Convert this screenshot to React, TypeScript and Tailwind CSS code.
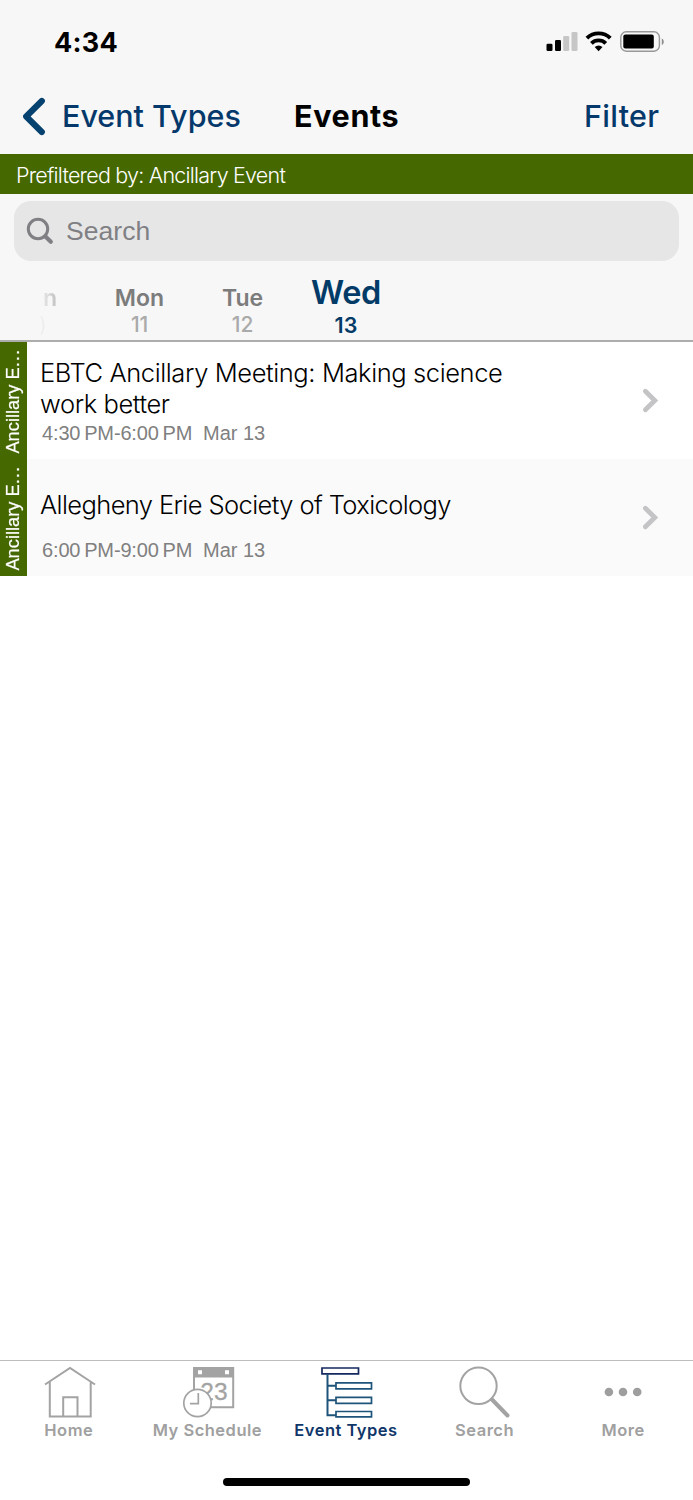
import React from "react";

const sans = "font-['Inter','Liberation_Sans',sans-serif]";
const arial = "font-['Liberation_Sans',Arial,sans-serif]";

function StatusIcons() {
  return (
    <svg width="120" height="24" viewBox="545 30 120 24" className="block">
      <rect x="546.5" y="43.7" width="6" height="7.3" rx="1.3" fill="#000" />
      <rect x="555" y="40" width="6" height="11" rx="1.3" fill="#000" />
      <rect x="563.2" y="36" width="6" height="15" rx="1.3" fill="#c6c6c6" />
      <rect x="571.5" y="32" width="6" height="19" rx="1.3" fill="#c6c6c6" />
      <g fill="none" stroke="#000" strokeWidth="3.9">
        <path d="M586.9 38.1a16.8 16.8 0 0 1 23.4 0" />
        <path d="M591.4 43.3a10.4 10.4 0 0 1 14.4 0" />
      </g>
      <path d="M594.7 47.1a5.6 5.6 0 0 1 7.8 0L598.6 51.3z" fill="#000" />
      <rect x="620.8" y="31.8" width="38.6" height="19.4" rx="5.4" fill="none" stroke="#989898" strokeWidth="1.4" />
      <rect x="623.3" y="34.5" width="30.5" height="14" rx="2" fill="#000" />
      <path d="M661.8 38.4c2.6 1.2 2.6 5.4 0 6.6z" fill="#8c8c8c" />
    </svg>
  );
}

function Day({ name, date, width }: { name: string; date: string; width: string }) {
  return (
    <div className={`${width} flex shrink-0 flex-col items-center pt-[18px]`}>
      <span className="text-[23px] leading-[27px] font-semibold text-[#7c7c7c]">{name}</span>
      <span className="text-[21px] leading-[26px] font-medium tracking-[-0.200px] text-[#aaaaaa]">{date}</span>
    </div>
  );
}

function EventRow({ title, hours, date, row, titleBox }: { title: React.ReactNode; hours: string; date: string; row: string; titleBox: string }) {
  return (
    <div className={`flex h-[117px] ${row}`}>
      <div className="flex w-[27px] flex-col items-start justify-end bg-[#466800] pb-[5px]">
        <span className={`${arial} -ml-px rotate-180 text-[18.300px] leading-[27px] whitespace-nowrap text-white [-webkit-text-stroke:0.200px_white] [writing-mode:vertical-rl]`}>
          Ancillary E<span className="tracking-[1px]">...</span>
        </span>
      </div>
      <div className="w-[596px] pl-[13px]">
        <div className={`${titleBox} text-[25.500px] leading-[31px] font-light whitespace-nowrap text-black`}>{title}</div>
        <div className={`${arial} flex pl-[2px] text-[20px] leading-[24px] whitespace-pre text-[#808080]`}>
          <span className="w-[161px] tracking-[-0.150px]">{hours}</span>
          <span>{date}</span>
        </div>
      </div>
      <svg width="20" height="117" viewBox="0 0 20 117" className="ml-[17px]" fill="none" stroke="#c4c4c6" strokeWidth="4.800" strokeLinecap="round" strokeLinejoin="miter">
        <path d="M5.400 49.200l9.400 9.300-9.400 9.300" />
      </svg>
    </div>
  );
}

function HomeIcon() {
  return (
    <svg width="54" height="54" viewBox="0 0 54 54" fill="none" stroke="#a3a3a3" strokeWidth="2">
      <path d="M2 19.500L27 3l25 16.500M6.800 16.500V51.500H47.700V16.500" />
      <path d="M20.200 51V32.300H34.500V51" />
    </svg>
  );
}

function ScheduleIcon() {
  return (
    <svg width="54" height="54" viewBox="0 0 54 54">
      <path d="M12 3H51.200V42.200H12z" fill="#fff" stroke="#a3a3a3" strokeWidth="2" />
      <path d="M11 2h41v10.500H11z" fill="#a3a3a3" />
      <path d="M16 5.200h4v4h-4zM43 5.200h4v4h-4z" fill="#fff" />
      <text x="18.300" y="34.500" fontSize="24.500" fill="#a3a3a3" stroke="#a3a3a3" strokeWidth="0.300" fontFamily="Liberation Sans, sans-serif">23</text>
      <circle cx="15.500" cy="38" r="13.700" fill="#fff" stroke="#a3a3a3" strokeWidth="1.700" />
      <path d="M16.300 28v10.600H8" fill="none" stroke="#a3a3a3" strokeWidth="1.700" />
    </svg>
  );
}

function TypesIcon() {
  return (
    <svg width="54" height="54" viewBox="0 0 54 54" fill="none" stroke="#1e5479" strokeWidth="1.700">
      <path d="M2 3H38.500V8.800H2z" stroke="#15285f" />
      <path d="M7.500 9V50.200H16M7.500 20.700H16M7.500 35.300H16" strokeWidth="2" />
      <path d="M16 17.800H51.500V23.800H16zM16 32.300H51.500V38.300H16zM16 46.500H51.500V51.800H16z" />
    </svg>
  );
}

function SearchTabIcon() {
  return (
    <svg width="54" height="54" viewBox="0 0 54 54" fill="none" stroke="#a3a3a3">
      <circle cx="20.500" cy="20.800" r="18.200" strokeWidth="2" />
      <path d="M34 34.500L49.500 50.500" strokeWidth="4" strokeLinecap="round" />
    </svg>
  );
}

function MoreIcon() {
  return (
    <svg width="54" height="54" viewBox="0 0 54 54" fill="#9e9e9e">
      <circle cx="11.900" cy="27" r="4.300" />
      <circle cx="26" cy="27" r="4.300" />
      <circle cx="40.200" cy="27" r="4.300" />
    </svg>
  );
}

function Tab({ icon, label, color = "text-[#a0a0a0]", inset = "pl-[1px]" }: { icon: React.ReactNode; label: string; color?: string; inset?: string }) {
  return (
    <div className={`flex flex-1 flex-col items-center pt-[4px] ${color}`}>
      <div className={inset}>{icon}</div>
      <span className="-ml-px text-[16.500px] leading-[22px] font-semibold tracking-[0.500px] whitespace-nowrap">{label}</span>
    </div>
  );
}

export default function App() {
  return (
    <div className={`${sans} flex h-[1500px] w-[693px] flex-col overflow-hidden bg-white`}>
      <header className="h-[154px] bg-[#f7f7f7]">
        <div className="flex h-[84px] items-center justify-between pr-[28px] pl-[54px]">
          <span className="pt-px text-[27px] leading-[32px] font-bold tracking-[0.250px]">4:34</span>
          <StatusIcons />
        </div>
        <div className="flex h-[64px] items-center">
          <svg width="26" height="40" viewBox="0 0 26 40" className="ml-[22px]" fill="none" stroke="#06426f" strokeWidth="6.200" strokeLinecap="round" strokeLinejoin="round">
            <path d="M19.800 5L4.200 20.500L19.800 36" />
          </svg>
          <span className="ml-[14px] w-[232px] text-[30.500px] leading-[38px] font-medium text-[#06396b]">Event Types</span>
          <span className="w-[290px] text-[30.500px] leading-[38px] font-bold tracking-[0.650px]">Events</span>
          <span className="text-[30.500px] leading-[38px] font-medium tracking-[0.300px] text-[#06396b]">Filter</span>
        </div>
      </header>

      <div className="flex h-[40px] items-center bg-[#466800] pt-[2px] pl-[16px] text-[21.500px] leading-[26px] font-light tracking-[-0.780px] text-white">
        Prefiltered by: Ancillary Event
      </div>

      <div className="h-[73px] bg-[#f7f7f7] px-[14px] pt-[7px]">
        <div className="flex h-[60px] items-center rounded-[17px] bg-[#e6e6e7] pl-[12px]">
          <svg width="30" height="30" viewBox="0 0 30 30" fill="none" stroke="#808084">
            <circle cx="12" cy="13" r="9.700" strokeWidth="3" />
            <path d="M19.200 20.200L24.800 25.800" strokeWidth="4.200" strokeLinecap="round" />
          </svg>
          <span className={`${arial} ml-[10px] text-[26.500px] leading-[32px] tracking-[0.050px] text-[#808084]`}>Search</span>
        </div>
      </div>

      <div className="flex h-[75px] shrink-0 border-b-2 border-[#adadad] bg-[#f7f7f7]">
        <div className="flex w-[88px] flex-col pt-[18px] pl-[38px] [mask-image:linear-gradient(to_right,transparent_38px,black_80px)]">
          <span className="pl-[5px] text-[23px] leading-[27px] font-semibold text-[#7c7c7c]">n</span>
          <span className="pl-px text-[21px] leading-[26px] text-[#aaaaaa]">)</span>
        </div>
        <Day name="Mon" date="11" width="w-[103px]" />
        <Day name="Tue" date="12" width="w-[103px]" />
        <div className="flex w-[104px] flex-col items-center pt-[6px] text-[#033b68]">
          <span className="text-[32.500px] leading-[40px] font-semibold tracking-[-0.350px]">Wed</span>
          <span className="text-[21.500px] leading-[24px] font-semibold">13</span>
        </div>
      </div>

      <main className="flex-1">
        <EventRow row="bg-white" titleBox="pt-[15px] pb-[2px] tracking-[-0.400px]" title={<>EBTC Ancillary Meeting: Making science<br />work better</>} hours={"4:30\u2009PM-6:00\u2009PM"} date="Mar 13" />
        <EventRow row="bg-[#fafafa]" titleBox="pt-[30px] pb-[18px] tracking-[-0.600px]" title="Allegheny Erie Society of Toxicology" hours={"6:00\u2009PM-9:00\u2009PM"} date="Mar 13" />
      </main>

      <footer className="h-[140px] shrink-0 border-t border-[#bdbdbd] bg-white">
        <nav className="flex h-[117px]">
          <Tab icon={<HomeIcon />} label="Home" />
          <Tab icon={<ScheduleIcon />} label="My Schedule" inset="pl-[3px]" />
          <Tab icon={<TypesIcon />} label="Event Types" color="text-[#10376a]" />
          <Tab icon={<SearchTabIcon />} label="Search" inset="" />
          <Tab icon={<MoreIcon />} label="More" inset="" />
        </nav>
        <div className="mx-auto h-[8px] w-[247px] rounded-full bg-black" />
      </footer>
    </div>
  );
}
